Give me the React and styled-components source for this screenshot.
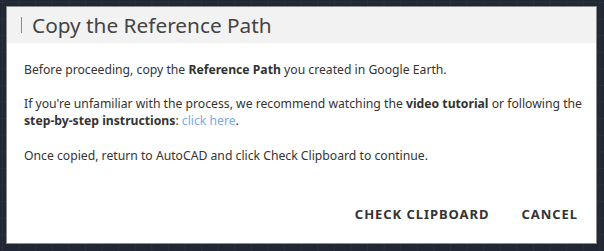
import React from 'react';
import styled, {createGlobalStyle} from 'styled-components';

const GlobalStyle = createGlobalStyle`
  html, body {
    margin: 0;
    padding: 0;
    height: 100%;
  }
  body {
    background-color: #212833;
    background-image:
      linear-gradient(to right, #29303b 1px, transparent 1px),
      linear-gradient(to bottom, #29303b 1px, transparent 1px);
    background-size: 16.6px 16.6px;
    background-position: 2px 2px;
    font-family: "Noto Sans", "Open Sans", sans-serif;
  }
`;

const Page = styled.div`
  padding: 6px;
`;

const Dialog = styled.div`
  width: 589px;
  height: 236px;
  background: #fff;
  border: 1px solid #8c8c8c;
  display: flex;
  flex-direction: column;
`;

const Header = styled.div`
  height: 36px;
  background: #f2f2f2;
  display: flex;
  align-items: center;
  padding-left: 14px;
  gap: 10px;
`;

const TitleBar = styled.span`
  width: 1px;
  height: 16px;
  background: #8a8a8a;
`;

const Title = styled.h1`
  margin: 0;
  font-size: 20.8px;
  font-weight: 400;
  color: #444;
  line-height: 1;
`;

const Body = styled.div`
  flex: 1;
  padding: 18px 8px 0 17px;
  color: #333;
  font-size: 12.2px;
  line-height: 17px;
`;

const Para = styled.p`
  margin: 0 0 17px;
  &:last-child {
    margin-top: 18px;
  }
`;

const Link = styled.a`
  color: #7ba7ec;
  text-decoration: none;
`;

const Footer = styled.div`
  display: flex;
  justify-content: flex-end;
  padding: 0 2px 14px 0;
`;

const Button = styled.button`
  background: none;
  border: none;
  padding: 6px 16px;
  font-family: inherit;
  font-size: 13px;
  font-weight: 700;
  letter-spacing: 0.95px;
  color: #333;
  text-transform: uppercase;
  cursor: pointer;
`;

const App = () => {
  return (
    <>
      <GlobalStyle/>
      <Page>
        <Dialog>
          <Header>
            <TitleBar/>
            <Title>Copy the Reference Path</Title>
          </Header>
          <Body>
            <Para>Before proceeding, copy the <b>Reference Path</b> you created in Google Earth.</Para>
            <Para>If you're unfamiliar with the process, we recommend watching the <b>video tutorial</b> or following the <b>step-by-step instructions</b>: <Link href="#">click here</Link>.</Para>
            <Para>Once copied, return to AutoCAD and click Check Clipboard to continue.</Para>
          </Body>
          <Footer>
            <Button>Check Clipboard</Button>
            <Button>Cancel</Button>
          </Footer>
        </Dialog>
      </Page>
    </>
  );
}

export default App;
